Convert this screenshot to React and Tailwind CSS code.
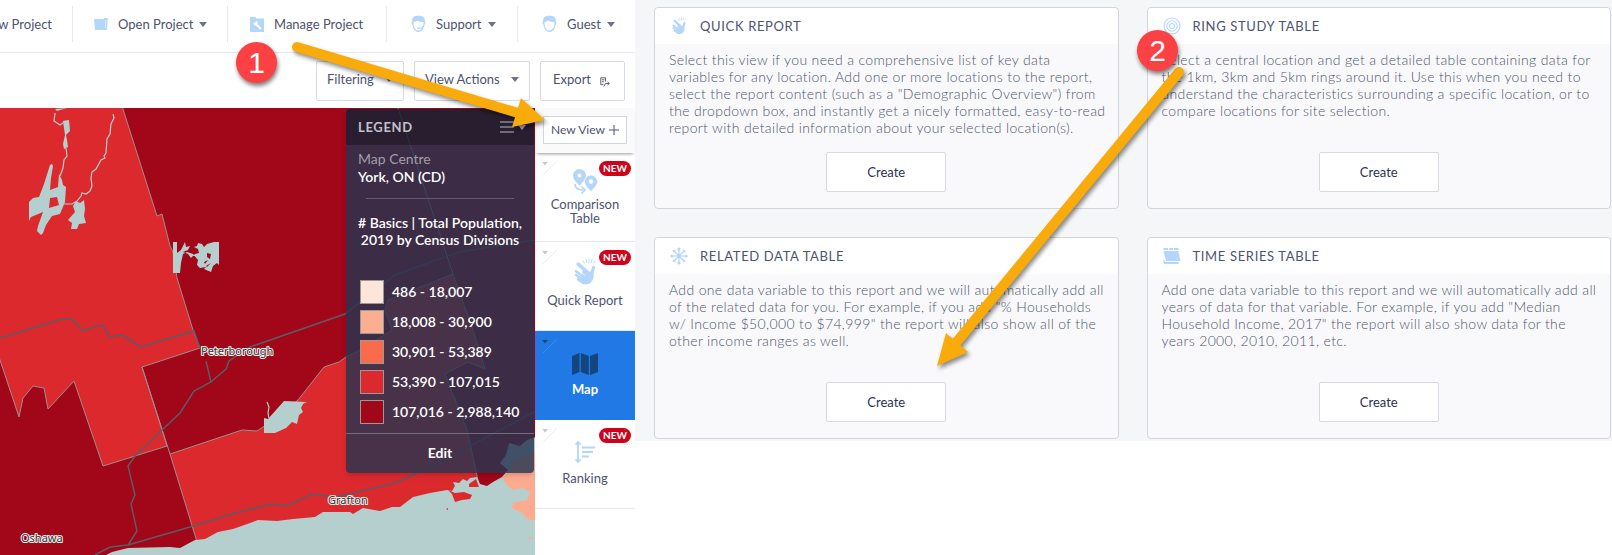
import React from "react";

const LINE = "#b4cfcd";

function Caret({ className = "" }) {
  return (
    <svg viewBox="0 0 8 5" aria-hidden="true" className={"h-[5px] w-2 shrink-0 " + className}>
      <path d="M0 0h8L4 5z" fill="currentColor" />
    </svg>
  );
}

function FolderIcon() {
  return (
    <svg viewBox="0 0 14 12" className="h-3 w-3.5" fill="#b5d6fb" aria-hidden="true">
      <path d="M0 1h9.500l.8-1H13.500l.3 1-1 11H1z" />
      <path d="M12 2l-.6 8" stroke="#fff" strokeWidth=".5" />
    </svg>
  );
}

function ManageIcon() {
  return (
    <svg viewBox="0 0 14 15" className="h-[15px] w-3.5" aria-hidden="true">
      <path d="M0 0h5.500l1 1.500H14V15H0z" fill="#b5d6fb" />
      <path d="M5.200 6.200l5 5" stroke="#fff" strokeWidth="2" strokeLinecap="round" />
      <path d="M3.200 6a2.600 2.600 0 0 0 4.200 1.800A2.600 2.600 0 0 0 5.500 3.700l.6 1.900-1.200 1z" fill="#fff" />
    </svg>
  );
}

function FaceIcon({ headset }) {
  return (
    <svg viewBox="0 0 15 18" className="h-[18px] w-[15px]" aria-hidden="true">
      <path
        d="M1.200 6C.8 2 4 .8 7.500.8S14.200 2 13.800 6c1 1 .8 3-.3 3.700C12.800 14 10.500 17 7.500 17S2.200 14 1.500 9.700C.4 9 .2 7 1.200 6z"
        fill="#b5d6fb"
      />
      <path
        d="M2.500 7.200c1.500-.2 3-.8 3.500-1.700 1.500 1 4.300 1.600 6.500 1.600 0 4.500-1.800 8.400-5 8.400s-5-3.500-5-8.300z"
        fill="#fff"
      />
      {headset && <path d="M6 13.200h4l2.500-2" stroke="#b5d6fb" strokeWidth="1.300" fill="none" />}
    </svg>
  );
}

function SnapIcon({ className }) {
  return (
    <svg viewBox="0 0 22 28" className={className} fill="none" stroke="#b5d6fb" strokeLinecap="round" aria-hidden="true">
      <path d="M9 11l4 2.500h4l2.500 1.500c.8 4-.2 7.500-3 9.800-2.500 2-6 2.400-9 .4l-.5-5.200z" fill="#b5d6fb" stroke="none" />
      <path d="M4.200 6.200l9 8" strokeWidth="3.600" />
      <path d="M19.600 9.500l-2 6.500" strokeWidth="3.200" />
      <path d="M2 13.200l7 5.300M2 17l7 5M4 21.300l5 3.400" strokeWidth="2.600" />
      <path d="M3.500 11.500l7 5.700" stroke="#fff" strokeWidth=".7" />
      <path d="M9 3l1.300 2.500M12 1.200l.7 3.600M15 .8v4M18 1.200l-.7 3.500M20.800 3l-1.500 2" strokeWidth=".9" />
    </svg>
  );
}

function RingsIcon({ className }) {
  return (
    <svg viewBox="0 0 18 18" className={className} fill="none" stroke="#b5d6fb" strokeWidth="1.100" aria-hidden="true">
      <circle cx="9" cy="9" r="8" />
      <circle cx="9" cy="9" r="5.200" />
      <circle cx="9" cy="9" r="2.500" />
    </svg>
  );
}

function HubIcon({ className }) {
  return (
    <svg viewBox="0 0 18 18" className={className} aria-hidden="true">
      <path d="M9 2v14M2 9h14M4 4l10 10M14 4L4 14" stroke="#b5d6fb" strokeWidth="1.200" />
      <g fill="#b5d6fb">
        <circle cx="9" cy="9" r="2.200" />
        <circle cx="9" cy="2" r="1.600" />
        <circle cx="9" cy="16" r="1.600" />
        <circle cx="2" cy="9" r="1.600" />
        <circle cx="16" cy="9" r="1.600" />
        <circle cx="4" cy="4" r="1.300" />
        <circle cx="14" cy="14" r="1.300" />
        <circle cx="14" cy="4" r="1.300" />
        <circle cx="4" cy="14" r="1.300" />
      </g>
    </svg>
  );
}

function CalendarIcon({ className }) {
  return (
    <svg viewBox="0 0 18 18" className={className} fill="#b5d6fb" aria-hidden="true">
      <path d="M.5 1H5v2H.5zM6 1h4v2H6zM11 1h4.500v2H11z" />
      <path d="M.5 4h15l2 10H3z" />
      <path d="M.5 6v11h15v-2H2L.5 12z" />
    </svg>
  );
}

function PinsIcon() {
  return (
    <svg viewBox="0 0 26 26" className="mb-0.5 h-[26px] w-[26px]" aria-hidden="true">
      <path
        fillRule="evenodd"
        fill="#b5d6fb"
        d="M7.500 0a6.500 6.500 0 0 1 6.500 6.500c0 3.500-3 6.500-6.500 10C4 13 1 10 1 6.500A6.500 6.500 0 0 1 7.500 0zm0 4.500a2 2 0 1 0 0 4 2 2 0 0 0 0-4z"
      />
      <path
        fillRule="evenodd"
        fill="#b5d6fb"
        stroke="#fff"
        strokeWidth=".7"
        d="M19 6a6.500 6.500 0 0 1 6.500 6.500c0 3.500-3 6.500-6.500 10-3.500-3.500-6.500-6.500-6.500-10A6.500 6.500 0 0 1 19 6zm0 4.500a2 2 0 1 0 0 4 2 2 0 0 0 0-4z"
      />
      <path d="M3 15c0 4 2 6 8 6M9.500 17.500l3.500 3.500-3.500 3.500" stroke="#b5d6fb" strokeWidth="1.700" fill="none" />
    </svg>
  );
}

function FoldedMapIcon() {
  return (
    <svg viewBox="0 0 26 22" className="h-[22px] w-[26px]" fill="#14457f" aria-hidden="true">
      <path d="M0 3l7.500-3v19L0 22zM8.800 0l8 3v19l-8-3zM18 3l8-3v19l-8 3z" />
    </svg>
  );
}

function RankIcon() {
  return (
    <svg viewBox="0 0 20 24" className="h-6 w-5" stroke="#b5d6fb" fill="none" aria-hidden="true">
      <path d="M3 2v20M.5 4.500L3 2l2.500 2.500M.5 19.500L3 22l2.500-2.500" strokeWidth="1.800" />
      <path d="M7 7.500h13M7 12h11M7 16.500h7" strokeWidth="1.800" />
    </svg>
  );
}

function ExportIcon() {
  return (
    <svg viewBox="0 0 10 10" className="mt-1 h-2.5 w-2.5" fill="none" stroke="#5b6075" strokeWidth="1" aria-hidden="true">
      <path d="M5.500 4.500V.8H.8v6.900h2.700M2 2.800h2.500M2 4.800h2M3.800 9.500l1.700-3h3.800M7.500 4.800l1.800 1.700-1.800 1.700" />
    </svg>
  );
}

function NavItem({ icon, label, caret, className }) {
  return (
    <button
      type="button"
      className={"flex h-9 shrink-0 items-center border-r border-[#e8e9ee] text-[13px] last:border-r-0 " + className}
    >
      {icon && <span className="mr-2.5">{icon}</span>}
      <span className="whitespace-nowrap">{label}</span>
      {caret && <Caret className="ml-1.5 text-[#6c7185]" />}
    </button>
  );
}

function ToolButton({ children, className }) {
  return (
    <button
      type="button"
      className={"flex h-10 items-center justify-between rounded-xs border border-[#d8dae2] bg-white pb-0.5 text-[13px] whitespace-nowrap " + className}
    >
      {children}
    </button>
  );
}

const classes = [
  ["486 - 18,007", "bg-[#fee5d9]"],
  ["18,008 - 30,900", "bg-[#fcae91]"],
  ["30,901 - 53,389", "bg-[#fb6a4a]"],
  ["53,390 - 107,015", "bg-[#dc292e]"],
  ["107,016 - 2,988,140", "bg-[#a10619]"],
];

function Legend() {
  return (
    <section className="absolute top-px right-px w-[188px] overflow-hidden rounded-[4px] bg-[#263451]/82 text-white shadow-md">
      <header className="flex h-9 items-center justify-between bg-black/30 pr-2 pl-3">
        <h2 className="text-[13px] font-bold tracking-wider text-[#c3c1c8]">LEGEND</h2>
        <button type="button" aria-label="Legend options" className="flex items-center gap-1 text-[#b9b7bf]">
          <svg viewBox="0 0 14 12" className="h-3 w-3.5" stroke="currentColor" strokeWidth="1.200" aria-hidden="true">
            <path d="M0 1h14M0 6h14M0 11h14" />
          </svg>
          <Caret />
        </button>
      </header>
      <div className="px-3 pt-[5px] text-sm">
        <p className="leading-[18px] text-[#a39daa]">Map Centre</p>
        <p className="leading-[18px] font-semibold">York, ON (CD)</p>
      </div>
      <hr className="mx-5 mt-3 border-[#665c71]" />
      <h3 className="mt-[15px] px-2 text-center text-sm leading-[17px] font-semibold">
        # Basics | Total Population, 2019 by Census Divisions
      </h3>
      <ul className="mt-8 flex flex-col gap-1.5 px-3.5 text-sm font-semibold">
        {classes.map(([range, swatch]) => (
          <li key={range} className="flex items-center gap-2 whitespace-nowrap">
            <span className={"size-6 shrink-0 border border-[#999] " + swatch} />
            {range}
          </li>
        ))}
      </ul>
      <button type="button" className="mt-[9px] h-10 w-full border-t border-[#756b7d] pb-0.5 text-sm font-bold">
        Edit
      </button>
    </section>
  );
}

function CensusMap() {
  return (
    <svg
      viewBox="0 108 535 447"
      preserveAspectRatio="xMinYMin slice"
      className="absolute inset-0 h-full w-full"
      role="img"
      aria-label="Total population by census division"
    >
      <rect x="0" y="108" width="535" height="447" fill="#a10619" />
      <g fill="#dc292e" stroke="#9a8f8f" strokeWidth="1">
        <path d="M-2 106H122L157 216l5-2 8 32 3 6 4 26 16 52 7 18-58 19 25 79-64 20-29-85-26 28-4-21-11-2-10 12-4 19L-2 354z" />
        <path d="M170 454l72-24 15 1 9-6 32-25 26-33 15-5 7-5 16-8 30-19-7-20 3-10 65-26 19 53 13 42-17-7-23 12 22 56 12 55 5 60H198z" />
      </g>
      <path d="M398 108l55 166M142 367l28 87" stroke="#9a8f8f" fill="none" />
      <path
        fill={LINE}
        d="M106 555L112 552 128 548 170 547 180 548 195 540 205 539 218 532 233 529 250 523 258 520 277 521 293 519 315 517 323 512 350 512 353 514 363 508 380 511 392 507 400 507 413 497 430 493 447 490 452 491 455 486 453 482 459 483 463 479 467 481 470 478 477 477 480 484 487 486 493 482 502 477 508 470 500 463 506 455 509 443 520 446 527 440 536 437 536 555z"
      />
      <path
        d="M536 452L515 460 503 478 506 484 513 490 523 488 530 492 527 500 513 503 512 508 522 513 528 519 536 521z"
        fill="#fcab8f"
      />
      <path d="M448 490l7 3 9-1 8 3-2 4-8 1-7 2-3-8zM469 484l7-5 3 8-10 0zM446 509l2-1v2z" fill="#dc292e" />
      <path d="M527 538l6-1-1 2z" fill="#fcab8f" />
      <g fill={LINE}>
        <path
          fillRule="evenodd"
          d="M59 174l3 6 1 5 3 2-1 15-5 12-8 2-6 9-3 8-2 2-4-4 1-5 5-14-12 5-2 4 0-19 4-4 6-1 5-13 6-19 2-1 1 2-2 12-1 12 8-3 1-13zM50 198l-1 10 10-3-2-8z"
        />
        <path d="M76 201l4 2 4-3 1 9-1 7 2 7-7 1-2 5h-6l1-6-4-3 7-8-2-6zM63 121l6-1 1 11-4 4 1 5 1 7-4 2-1-5 2-9zM55 109l12-1-10 3z" />
        <path
          fillRule="evenodd"
          d="M173 242h4v11l4-3 4-8 1 5 4-1-2 4-5 2 5 2 3 4 4-4 4-1-1-4-4-2 3-1 1-3 4 1 2 3 3-3 7-2h5v23l-2-2-4 3-2 6-7-3 2-2-6 1-3-3 1-5-5-6-6-2-4 2-2 9-1 10h-7zM207 253l4 1-1 5-3-2z"
        />
        <path d="M264 418l4 1 16-18 23 1-4 2-2 4 2 4-4 3-2 9-5-2-6 6-11 5h-11z" />
      </g>
      <path d="M204 262l4-2-3 4zM206 266l5-3-4 4z" fill="#a10619" />
      <g fill="none" stroke={LINE} strokeWidth="1.200">
        <path d="M55 113l-1 8 6 4 6-4M66 148l1 8-3 4-1 8-3 8" />
        <path d="M64 204h8l5-3 4-5 1-3 4 1 4-3 2-5-1-8 1-6 4-3 5-9 4-2-1-2 2-3 1-14 3-5 1-10 3-6-1-4" />
        <path d="M267 402l2 5-1 6 1 5" />
      </g>
      <g fill="none" stroke="#5b5c66" strokeWidth="1.500">
        <path d="M0 338l62-19h10l11 12 14-5h7l5 11 13-2 19 12 53-16 6 17M206 361l5 21" />
        <path d="M534 240l-75 12-64 23-50 39-95 33-21 14-3 8-15 13-17 9-14 22-18 17-27 26-7 10 7 29-4 9 6 27-9 14" />
        <path d="M95 555l15-8 18-2 62-18 45-14 37-9 14 2 26-12 22 3 16-3 48-12 42-20 94-50" />
      </g>
      <g
        fontFamily="Noto Sans, sans-serif"
        fontSize="11"
        fill="#333"
        stroke="#f4eeee"
        strokeWidth="2"
        strokeLinejoin="round"
        paintOrder="stroke"
      >
        <text x="201" y="355">Peterborough</text>
        <text x="328" y="504">Grafton</text>
        <text x="21" y="542">Oshawa</text>
      </g>
    </svg>
  );
}

function ViewTab({ icon, label, isNew, active }) {
  return (
    <li className={"relative border-b " + (active ? "border-[#2079e4] bg-[#2079e4]" : "border-[#e8e9ee] bg-white")}>
      <Caret className={"absolute top-2 left-1.5 scale-75 " + (active ? "text-[#14457f]" : "text-[#c5c7cf]")} />
      <svg viewBox="0 0 14 14" className="absolute top-2 left-2 size-3.5" aria-hidden="true">
        <path d="M0 14L14 0" stroke={active ? "#3a8aec" : "#ecedf1"} />
      </svg>
      {isNew && (
        <span className="absolute top-2 right-1 h-[15px] rounded-full bg-[#d0021b] px-1 text-[10px] leading-[15px] font-bold text-white">
          NEW
        </span>
      )}
      <button
        type="button"
        className={
          "flex h-[88px] w-full flex-col items-center pt-3 text-[13px] leading-[14px] " +
          (active ? "font-bold text-white" : "text-[#4d5370]")
        }
      >
        <span className="flex h-8 items-end">{icon}</span>
        <span className="flex h-7 items-center px-2.5">{label}</span>
      </button>
    </li>
  );
}

function ReportCard({ icon, title, children }) {
  return (
    <article className="flex flex-col rounded-[4px] border border-[#d3d5dc] bg-[#f9f9fb]">
      <header className="flex h-9 items-center gap-3 rounded-t-[4px] bg-white px-[15px]">
        {icon}
        <h2 className="text-[13px] tracking-wider text-[#4d5370]">{title}</h2>
      </header>
      <p className="pt-[7px] pr-2 pl-3.5 text-sm leading-[17px] font-light tracking-wide text-[#4f566e]">{children}</p>
      <div className="mt-auto flex justify-center pt-4 pb-4">
        <button type="button" className="h-10 w-[120px] rounded-xs border border-[#d8dae2] bg-white text-[13px] text-[#2b3252]">
          Create
        </button>
      </div>
    </article>
  );
}

function StepBadge({ n, className }) {
  return (
    <span
      className={
        "absolute z-30 flex size-[41px] items-center justify-center rounded-full bg-[#fc4144] [font-family:'Liberation_Sans',sans-serif] text-[30px] leading-none text-white shadow-[1px_3px_4px_rgba(0,0,0,0.5)] " +
        className
      }
    >
      {n}
    </span>
  );
}

export default function App() {
  const cardIcon = "size-[18px] shrink-0";
  return (
    <div className="relative flex min-h-screen items-stretch overflow-hidden bg-white font-[Lato,sans-serif] text-sm text-[#4d5370]">
      <main className="flex w-[635px] shrink-0 flex-col">
        <nav className="flex h-[53px] items-center justify-end overflow-hidden border-b border-[#e8e9ee] pb-1">
          <NavItem label="New Project" className="pr-5" />
          <NavItem icon={<FolderIcon />} label="Open Project" caret className="w-[155px] pl-[21px]" />
          <NavItem icon={<ManageIcon />} label="Manage Project" className="w-[159px] pl-[22px]" />
          <NavItem icon={<FaceIcon headset />} label="Support" caret className="w-[131px] pl-6" />
          <NavItem icon={<FaceIcon />} label="Guest" caret className="w-[117px] pl-6" />
        </nav>
        <div className="flex h-[55px] items-center justify-end gap-2.5 pr-2.5">
          <ToolButton className="w-[88px] px-2.5">
            Filtering <Caret className="text-[#6c7185]" />
          </ToolButton>
          <ToolButton className="w-[116px] px-2.5">
            View Actions <Caret className="text-[#6c7185]" />
          </ToolButton>
          <ToolButton className="w-[85px] pr-3.5 pl-3">
            Export <ExportIcon />
          </ToolButton>
        </div>
        <div className="flex min-h-[447px] flex-1">
          <div className="relative flex-1 overflow-hidden">
            <CensusMap />
            <Legend />
          </div>
          <aside className="w-[100px] shrink-0">
            <div className="relative z-10 flex h-[45px] items-center justify-center bg-[#fafafb] pb-0.5 shadow-[0_3px_3px_-2px_rgba(0,0,0,0.4)]">
              <button
                type="button"
                className="flex h-7 w-[84px] items-center justify-center gap-1 border border-[#d3d5dc] bg-white text-xs whitespace-nowrap"
              >
                New View
                <svg viewBox="0 0 10 10" className="h-2.5 w-2.5" stroke="currentColor" aria-hidden="true">
                  <path d="M5 0v10M0 5h10" />
                </svg>
              </button>
            </div>
            <ul>
              <ViewTab icon={<PinsIcon />} label="Comparison Table" isNew />
              <ViewTab icon={<SnapIcon className="h-7 w-[22px]" />} label="Quick Report" isNew />
              <ViewTab icon={<FoldedMapIcon />} label="Map" active />
              <ViewTab icon={<RankIcon />} label="Ranking" isNew />
            </ul>
          </aside>
        </div>
      </main>

      <section className="grid flex-1 auto-rows-fr grid-cols-2 gap-7 self-start bg-[#f5f6f8] pt-[7px] pr-px pb-0.5 pl-[19px]">
        <ReportCard icon={<SnapIcon className={cardIcon} />} title="QUICK REPORT">
          Select this view if you need a comprehensive list of key data variables for any location. Add one or more
          locations to the report, select the report content (such as a "Demographic Overview") from the dropdown box,
          and instantly get a nicely formatted, easy-to-read report with detailed information about your selected
          location(s).
        </ReportCard>
        <ReportCard icon={<RingsIcon className={cardIcon} />} title="RING STUDY TABLE">
          Select a central location and get a detailed table containing data for the 1km, 3km and 5km rings around it.
          Use this when you need to understand the characteristics surrounding a specific location, or to compare
          locations for site selection.
        </ReportCard>
        <ReportCard icon={<HubIcon className={cardIcon} />} title="RELATED DATA TABLE">
          Add one data variable to this report and we will automatically add all of the related data for you. For
          example, if you add "% Households w/ Income $50,000 to $74,999" the report will also show all of the other
          income ranges as well.
        </ReportCard>
        <ReportCard icon={<CalendarIcon className={cardIcon} />} title="TIME SERIES TABLE">
          Add one data variable to this report and we will automatically add all years of data for that variable. For
          example, if you add "Median Household Income, 2017" the report will also show data for the years 2000, 2010,
          2011, etc.
        </ReportCard>
      </section>

      <svg
        viewBox="0 0 1612 555"
        className="pointer-events-none absolute top-0 left-0 z-20 h-[555px] w-[1612px] max-w-none drop-shadow-[2px_3px_2px_rgba(0,0,0,0.45)]"
        aria-hidden="true"
      >
        <g stroke="#f9ab0b" strokeWidth="10" strokeLinecap="round">
          <path d="M297 47L518 113" />
          <path d="M1179 72L955 344" />
        </g>
        <g fill="#f9ab0b">
          <path d="M521 98l24 22-33 7z" />
          <path d="M946 333l22 19-31 14z" />
        </g>
      </svg>
      <StepBadge n="1" className="top-[42px] left-[236px]" />
      <StepBadge n="2" className="top-[30px] left-[1137px]" />
    </div>
  );
}
